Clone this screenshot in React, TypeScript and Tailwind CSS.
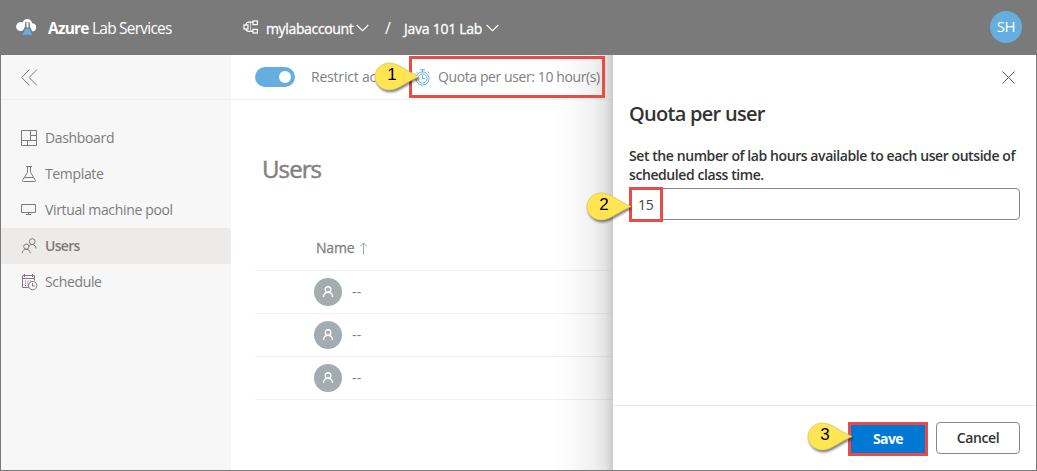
import type { ReactNode } from "react";

const iconProps = {
  fill: "none",
  stroke: "currentColor",
  strokeWidth: 1,
} as const;

function LogoIcon() {
  return (
    <svg width="20" height="17" viewBox="0 0 20 17" className="mt-px shrink-0">
      <circle cx="4.6" cy="7.600" r="4.500" fill="#fff" />
      <circle cx="16" cy="8.300" r="4.100" fill="#fff" />
      <path d="M6.500 6C6.500 2 8.500 0 11.300 0s4.700 2 5 5l-2 5H7Z" fill="#fff" />
      <path d="M9 3.300h4.800v4.200L18 16H4.800L9 7.500Z" fill="#7a7a7a" />
      <path d="M10.500 3.300h1.900v5.200h-1.900z" fill="#fff" />
      <path d="M9.600 9.700h3.600l3.100 6.100H6.400z" fill="#62b0e4" />
    </svg>
  );
}

function AccountIcon() {
  return (
    <svg width="16" height="14" viewBox="0 0 16 14" fill="none" stroke="#fff" strokeWidth="1.2" className="shrink-0">
      <rect x="1" y="5" width="4" height="4" />
      <rect x="10" y="1" width="4.4" height="3.6" />
      <rect x="10" y="9.4" width="4.4" height="3.6" />
      <path d="M3 5C3 3 4.500 2.200 6 2.200h4M3 9c0 2 1.500 2.400 3 2.400h4" />
      <path d="M7.6 2.2v9.2" strokeOpacity=".55" />
    </svg>
  );
}

function ChevronDown() {
  return (
    <svg width="13" height="8" viewBox="0 0 13 8" fill="none" stroke="#fff" strokeWidth="1.2" className="mt-px shrink-0">
      <path d="m.7 1 5.8 5.7L12.3 1" />
    </svg>
  );
}

function DashboardIcon() {
  return (
    <svg width="16" height="16" viewBox="0 0 16 16" {...iconProps}>
      <path d="M.5.5h15v15H.5zM9.5.5v10M.5 10.5h15M9.5 5.5h6M6.5 10.5v5" />
    </svg>
  );
}

function FlaskIcon() {
  return (
    <svg width="16" height="16" viewBox="0 0 16 16" {...iconProps}>
      <path d="M5 .5h6M6.5.5v5.7L1.6 14.4q-.4 1.1.8 1.1h11.2q1.2 0 .8-1.1L9.5 6.2V.5M3.6 11.5h8.8" />
    </svg>
  );
}

function MonitorIcon() {
  return (
    <svg width="16" height="16" viewBox="0 0 16 16" {...iconProps}>
      <path d="M.5 2.5h14v8H.5zM7.5 10.5v2M4.8 12.5h5.4" />
    </svg>
  );
}

function PeopleIcon() {
  return (
    <svg width="16" height="16" viewBox="0 0 16 16" {...iconProps}>
      <circle cx="11.2" cy="3.6" r="2.9" />
      <circle cx="5.3" cy="8.6" r="2.6" />
      <path d="M1.2 15.2c.2-2.4 1.8-3.9 4.1-3.9s3.7 1.500 3.900 3.900M8 8.200c.8-1.100 1.900-1.700 3.200-1.700 2.300 0 3.800 1.700 3.900 4" />
    </svg>
  );
}

function ScheduleIcon() {
  return (
    <svg width="17" height="17" viewBox="0 0 17 17" fill="none" stroke="#8b6f8b" strokeWidth="1" className="-mr-px">
      <path d="M7.500 13.500H1.500v-12h12v5M1.500 4.500h12M3.500 0v3M11.500 0v3" />
      <path d="M4 7h1M6.500 7h1M9 7h1M4 9.200h1M6.500 9.200h1M4 11.400h1M6.500 11.400h1" strokeWidth="1.2" />
      <circle cx="11.700" cy="11.600" r="4.200" stroke="#7c7c7c" />
      <path d="M11.500 9v3h2.300" stroke="#7c7c7c" />
    </svg>
  );
}

function StopwatchIcon() {
  return (
    <svg width="16" height="17" viewBox="0 0 16 17" fill="none" stroke="#69aede" strokeWidth="1" className="shrink-0">
      <circle cx="7.500" cy="9.500" r="6.600" />
      <circle cx="7.500" cy="9.500" r="4.600" />
      <path d="M5 .8h5M7.500.8v2.300M7.500 6.300v3.400h3M12.500 2.500l1.800 1.800M1.300 4.300l1.200-1.200" />
    </svg>
  );
}

const navItems: { label: string; icon: ReactNode; active?: boolean }[] = [
  { label: "Dashboard", icon: <DashboardIcon /> },
  { label: "Template", icon: <FlaskIcon /> },
  { label: "Virtual machine pool", icon: <MonitorIcon /> },
  { label: "Users", icon: <PeopleIcon />, active: true },
  { label: "Schedule", icon: <ScheduleIcon /> },
];

function Callout({ n, className }: { n: number; className: string }) {
  return (
    <div className={`absolute z-20 h-[32px] w-[50px] ${className}`}>
      <svg width="50" height="32" viewBox="0 0 50 32" className="absolute inset-0 overflow-visible drop-shadow-[1px_2px_1px_rgba(0,0,0,0.5)]">
        <path
          d="M15.500 1C7.200 1 1 7.100 1 14.500S7.200 28 15.500 28C24 28 32 20 45 14.500 32 9 24 1 15.500 1Z"
          fill="#ffe552"
          stroke="#d8c566"
          strokeWidth=".7"
        />
      </svg>
      <span className="absolute left-0 top-[3px] w-[36px] text-center font-['Liberation_Sans'] text-[17px] font-normal leading-[20px] tracking-normal text-black">
        {n}
      </span>
    </div>
  );
}

function Header() {
  return (
    <header className="flex h-[55px] shrink-0 items-center bg-[#7a7a7a] pb-[1px] pl-4 pr-[15px] text-sm text-white">
      <LogoIcon />
      <div className="ml-3 mt-[3px] w-[195px] whitespace-nowrap text-[15.500px] tracking-[-0.780px]">
        <b className="font-bold">Azure</b> Lab Services
      </div>
      <AccountIcon />
      <span className="ml-[7px] mt-[3px] w-[90px] whitespace-nowrap tracking-[-0.350px] [-webkit-text-stroke:0.3px]">mylabaccount</span>
      <ChevronDown />
      <span className="ml-4 mt-[2px] w-[19px] text-base">/</span>
      <span className="mt-[3px] w-[82px] whitespace-nowrap tracking-[-0.260px] [-webkit-text-stroke:0.3px]">Java 101 Lab</span>
      <ChevronDown />
      <div className="ml-auto flex size-8 items-center justify-center rounded-full bg-[#66aee0] text-[15px] tracking-[-0.500px]">SH</div>
    </header>
  );
}

function Sidebar() {
  return (
    <aside className="flex w-[231px] shrink-0 flex-col bg-[#f7f7f7] text-[#7c7c7c]">
      <div className="flex h-[45px] items-center border-b border-[#f1f1f1] pl-[21px]">
        <svg width="17" height="17" viewBox="0 0 17 17" {...iconProps}>
          <path d="M8.500.5.700 8.500l7.800 8M16 .5 8.200 8.500l7.800 8" />
        </svg>
      </div>
      <nav className="mt-5 flex flex-col">
        {navItems.map(({ label, icon, active }) => (
          <div
            key={label}
            className={`flex h-9 items-center gap-2 pl-[21px] text-sm tracking-[-0.350px] ${active ? "rounded-sm bg-[#edebe9] font-semibold tracking-[-0.700px]" : ""}`}
          >
            {icon}
            <span className="-mt-px">{label}</span>
          </div>
        ))}
      </nav>
    </aside>
  );
}

function UsersPage() {
  return (
    <main className="w-[382px] shrink-0 overflow-hidden bg-white text-[#818181]">
      <div className="flex h-[45px] items-center whitespace-nowrap border-b border-[#f3f3f3] pl-6 text-sm">
        <div className="flex h-5 w-10 shrink-0 items-center justify-end rounded-full bg-[#66aee0] pr-1">
          <div className="size-3 rounded-full bg-white" />
        </div>
        <span className="ml-4 w-[104px] overflow-hidden tracking-[-0.200px]">Restrict ac</span>
        <StopwatchIcon />
        <span className="ml-[7px] tracking-[-0.400px]">Quota per user: 10 hour(s)</span>
      </div>
      <h1 className="ml-[31px] mt-[52px] text-2xl leading-[34px] tracking-[-0.900px] [-webkit-text-stroke:0.5px]">Users</h1>
      <div className="ml-6 mt-10">
        <div className="flex h-[45px] items-center gap-[5px] border-b border-[#f1f1f1] pl-[61px] text-sm tracking-[-0.200px]">
          <span className="[-webkit-text-stroke:0.3px]">Name</span>
          <svg width="9" height="13" viewBox="0 0 9 13" fill="none" stroke="#9aa9a9" className="mt-px">
            <path d="M4.500 12.500V1M1 4.500 4.500 1 8 4.500" />
          </svg>
        </div>
        {[0, 1, 2].map((row) => (
          <div key={row} className="flex h-[43px] items-center border-b border-[#f1f1f1] pl-[59px]">
            <div className="flex size-7 items-center justify-center rounded-full bg-[#a3adb1]">
              <svg width="12" height="14" viewBox="0 0 12 14" fill="none" stroke="#fff" strokeWidth="1.400">
                <circle cx="6" cy="4.500" r="2.800" />
                <path d="M1.500 12c.1-2.900 1.800-4.600 4.500-4.600s4.400 1.700 4.500 4.600" />
              </svg>
            </div>
            <span className="ml-[10px] text-sm tracking-[0.300px]">--</span>
          </div>
        ))}
      </div>
    </main>
  );
}

function QuotaPanel() {
  return (
    <section className="relative flex flex-1 flex-col bg-white text-[#333]">
      <div className="pointer-events-none absolute inset-y-0 -left-[64px] w-[64px] bg-[linear-gradient(to_right,transparent,rgba(0,0,0,0.015)_35%,rgba(0,0,0,0.060)_70%,rgba(0,0,0,0.110)_88%,rgba(0,0,0,0.200))]" />
      <div className="flex h-[44px] items-center justify-end pr-[21px]">
        <svg width="13" height="13" viewBox="0 0 13 13" fill="none" stroke="#555" className="mr-px">
          <path d="m.5.5 12 12m0-12-12 12" />
        </svg>
      </div>
      <h2 className="ml-4 text-[20px] font-semibold leading-[30px] tracking-[-0.720px]">Quota per user</h2>
      <label className="ml-4 mt-[17px] flex flex-col whitespace-nowrap text-sm font-semibold leading-[19px] tracking-[-0.420px]">
        <span>Set the number of lab hours available to each user outside of</span>
        <span>scheduled class time.</span>
      </label>
      <div className="relative ml-4 mr-[17px] mt-1 flex h-8 items-center rounded-sm border border-[#8a8886] pl-2 text-sm text-[#444]">
        <span className="mt-px tracking-[-0.300px]">15</span>
        <div className="absolute -left-px -top-[2px] h-[35px] w-[34px] border-[3px] border-[#e94b46]" />
        <Callout n={2} className="-left-[44px] top-[3px]" />
      </div>
      <footer className="mt-auto flex h-[66px] items-start justify-end gap-2 border-t border-[#eaeaea] pr-[17px] pt-4 text-sm font-semibold">
        <div className="relative flex h-[34px] w-20 items-center justify-center border-[3px] border-[#e94b46] bg-[#0078d4] font-bold tracking-[-0.600px] text-white">
          Save
          <Callout n={3} className="-left-[44px] -top-[3px]" />
        </div>
        <div className="flex h-8 w-[84px] items-center justify-center rounded-sm border border-[#8a8886] tracking-[-0.400px]">Cancel</div>
      </footer>
    </section>
  );
}

export default function App() {
  return (
    <div className="relative flex h-[471px] w-[1037px] flex-col overflow-hidden bg-white font-['Open_Sans','Noto_Sans',sans-serif]">
      <Header />
      <div className="flex min-h-0 flex-1">
        <Sidebar />
        <UsersPage />
        <QuotaPanel />
      </div>
      <div className="absolute left-[409px] top-[56px] h-[42px] w-[196px] border-[3px] border-[#e94b46]" />
      <Callout n={1} className="left-[374px] top-[62px]" />
      <div className="pointer-events-none absolute inset-0 border border-[#7a7a7a]" />
    </div>
  );
}
